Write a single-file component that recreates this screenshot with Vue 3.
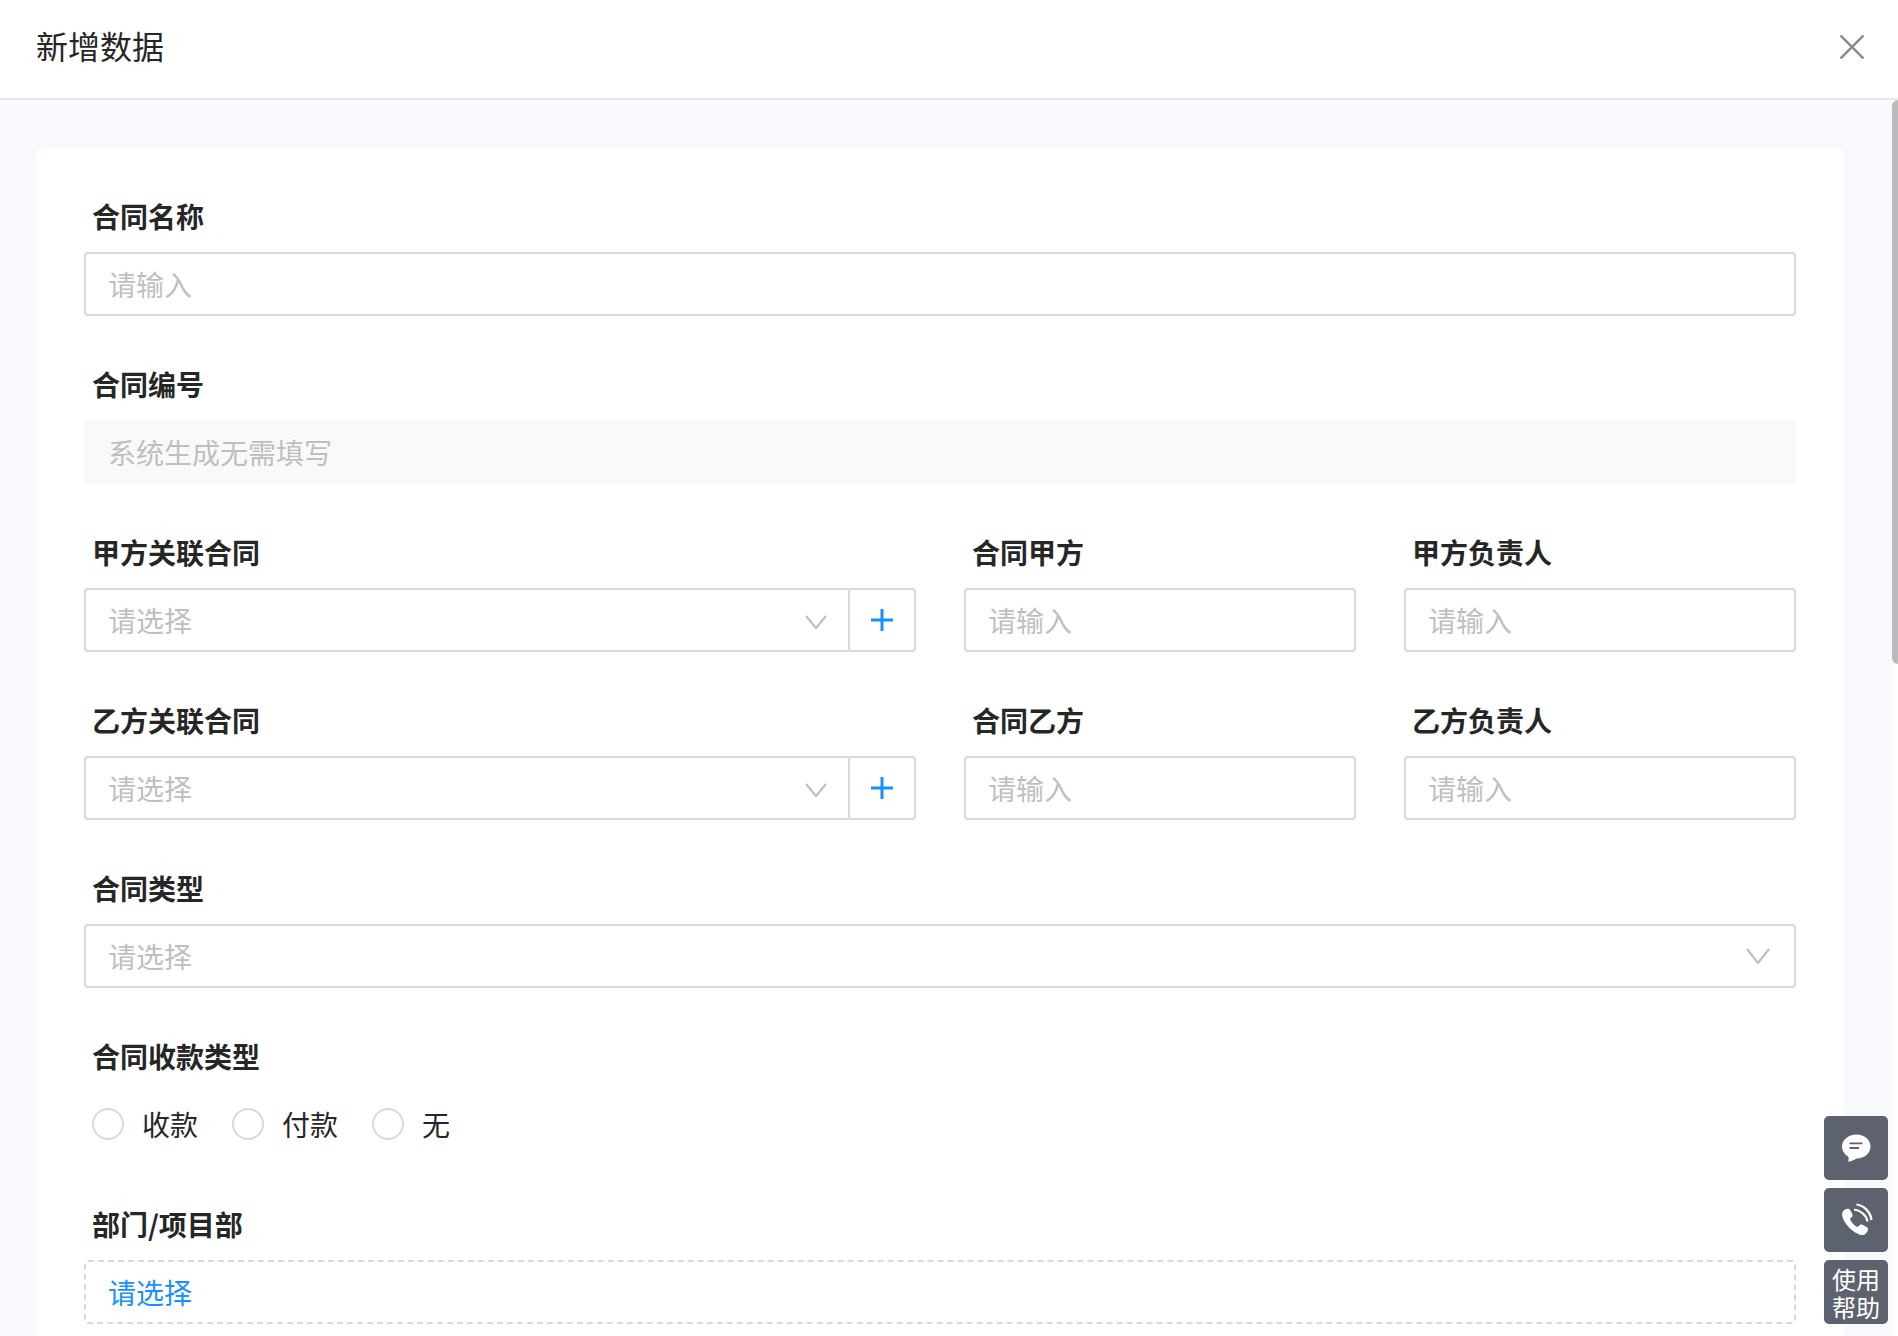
<script setup>
const pairs = [
  { link: '甲方关联合同', party: '合同甲方', owner: '甲方负责人' },
  { link: '乙方关联合同', party: '合同乙方', owner: '乙方负责人' },
]
const radios = ['收款', '付款', '无']
</script>

<template>
  <div class="page">
    <header class="head">
      <h1 class="title">新增数据</h1>
      <svg class="close" viewBox="0 0 24 24" width="24" height="24" aria-hidden="true">
        <path d="M0.5 0.500L23.500 23.500M23.500 0.500L0.500 23.500" fill="none" stroke="#8c8c8c" stroke-width="2.600" />
      </svg>
    </header>

    <main class="body">
      <section class="card">
        <div class="item">
          <div class="label">合同名称</div>
          <div class="input ph">请输入</div>
        </div>
        <div class="item">
          <div class="label">合同编号</div>
          <div class="input disabled">系统生成无需填写</div>
        </div>

        <div v-for="p in pairs" :key="p.link" class="row">
          <div class="item">
            <div class="label">{{ p.link }}</div>
            <div class="group">
              <div class="input ph select">
                请选择
                <svg class="chev" viewBox="0 0 22 14" width="22" height="14" aria-hidden="true">
                  <path d="M1 1L11 13L21 1" fill="none" stroke="#bfbfbf" stroke-width="2.200" />
                </svg>
              </div>
              <div class="addon">
                <svg viewBox="0 0 24 24" width="24" height="24" aria-hidden="true">
                  <path d="M12 1V23M1 12H23" fill="none" stroke="#1890ff" stroke-width="3" />
                </svg>
              </div>
            </div>
          </div>
          <div class="item">
            <div class="label">{{ p.party }}</div>
            <div class="input ph">请输入</div>
          </div>
          <div class="item">
            <div class="label">{{ p.owner }}</div>
            <div class="input ph">请输入</div>
          </div>
        </div>

        <div class="item">
          <div class="label">合同类型</div>
          <div class="input ph wide">
            请选择
            <svg class="chev-wide" viewBox="0 0 24 16" width="24" height="16" aria-hidden="true">
              <path d="M1 1L12 15L23 1" fill="none" stroke="#bfbfbf" stroke-width="2.200" />
            </svg>
          </div>
        </div>

        <div class="item">
          <div class="label">合同收款类型</div>
          <div class="radios">
            <label v-for="r in radios" :key="r" class="radio">
              <span class="dot"></span>
              <span class="radio-text">{{ r }}</span>
            </label>
          </div>
        </div>

        <div class="item">
          <div class="label">部门/项目部</div>
          <div class="input dashed">请选择</div>
        </div>
      </section>
    </main>

    <div class="scroll-thumb"></div>

    <aside class="floats">
      <div class="float">
        <svg viewBox="0 0 32 32" width="32" height="32" aria-hidden="true">
          <path d="M16.500 2.500C24.500 2.500 30.500 7.800 30.500 14.500C30.500 21.200 24.500 26.500 16.500 26.500C15 28 11 29.500 8 29.800C8.800 28.500 8.800 26 8.300 24.500C4.500 22.500 2 18.500 2 14.500C2 7.800 8.500 2.500 16.500 2.500Z" fill="#fff" />
          <path d="M9.500 11.300H22.500M9.500 16H19" stroke="#5d636e" stroke-width="1.800" fill="none" />
        </svg>
      </div>
      <div class="float">
        <svg viewBox="0 0 34 34" width="34" height="34" aria-hidden="true">
          <path d="M3.500 9C4.500 7 8 5 10 6C11 6.500 14 11 13.500 13C13.200 14 11.500 15 11 16C12 19 15.500 22.800 18.500 24C19.500 23.500 20.500 21.800 21.500 21.500C23 21 28.500 24 29 25.500C29.500 27.500 27 31 25 32C16 33.500 0.500 17 3.500 9Z" fill="#fff" />
          <path d="M15 6.500C21 7 27.500 12 28.500 18.500M17.500 1.500C25 2.500 31.500 9 32.500 17" fill="none" stroke="#fff" stroke-width="2.200" />
        </svg>
      </div>
      <div class="float help">使用<br />帮助</div>
    </aside>
  </div>
</template>

<style>
html, body { margin: 0; height: 100%; overflow: hidden; background: #fff; }
</style>

<style scoped>
* { box-sizing: border-box; }
.page {
  position: relative;
  width: 1898px;
  height: 1336px;
  overflow: hidden;
  background: #fff;
  font-family: "Noto Sans CJK SC", "Noto Sans", sans-serif;
  color: #262626;
}
.head {
  height: 100px;
  padding: 0 36px;
  display: flex;
  align-items: center;
  justify-content: space-between;
  border-bottom: 2px solid #e8e8e8;
}
.title { margin: 0 0 9px; font-size: 32px; font-weight: 400; line-height: 44px; }
.close { margin-right: -2px; margin-top: -4px; }
.body {
  height: 1236px;
  margin-right: 6px;
  padding: 48px 48px 0 36px;
  background: #f7f9fd;
  overflow: hidden;
}
.card {
  background: #fff;
  border-radius: 6px;
  padding: 48px 48px 48px;
}
.item { margin-bottom: 48px; min-width: 0; }
.label {
  height: 40px;
  margin-bottom: 16px;
  padding-left: 8px;
  font-size: 28px;
  line-height: 40px;
  font-weight: 700;
}
.input {
  height: 64px;
  padding: 0 22px;
  display: flex;
  align-items: center;
  justify-content: space-between;
  border: 2px solid #d9d9d9;
  border-radius: 4px;
  font-size: 28px;
  background: #fff;
}
.ph { color: #bfbfbf; }
.disabled { background: #f9f9f9; border-color: #f9f9f9; color: #bfbfbf; }
.dashed { border-style: dashed; color: #1890ff; }
.chev { display: block; margin-top: 4px; }
.chev-wide { display: block; margin-right: 2px; }
.row { display: grid; grid-template-columns: 832px 392px 392px; column-gap: 48px; }
.group { display: flex; }
.group .select { flex: 1; border-radius: 4px 0 0 4px; border-right: 0; padding-right: 21px; }
.addon {
  width: 68px;
  height: 64px;
  display: flex;
  align-items: center;
  justify-content: center;
  border: 2px solid #d9d9d9;
  border-radius: 0 4px 4px 0;
}
.radios { display: flex; height: 64px; align-items: center; padding-left: 8px; }
.radio { display: flex; align-items: center; margin-right: 34px; }
.dot {
  width: 32px;
  height: 32px;
  border: 2px solid #d9d9d9;
  border-radius: 50%;
  background: #fff;
}
.radio-text { margin-left: 18px; font-size: 28px; line-height: 40px; }
.scroll-thumb {
  position: absolute;
  right: 0;
  top: 100px;
  width: 6px;
  height: 564px;
  background: #bbb;
  border-radius: 6px 0 0 6px;
}
.floats {
  position: absolute;
  right: 10px;
  top: 1116px;
  display: flex;
  flex-direction: column;
  gap: 8px;
}
.float {
  width: 64px;
  height: 64px;
  display: flex;
  align-items: center;
  justify-content: center;
  background: #5d636e;
  border-radius: 5px;
}
.help {
  display: block;
  padding-top: 5px;
  color: #fff;
  font-size: 24px;
  line-height: 28px;
  text-align: center;
}
</style>
